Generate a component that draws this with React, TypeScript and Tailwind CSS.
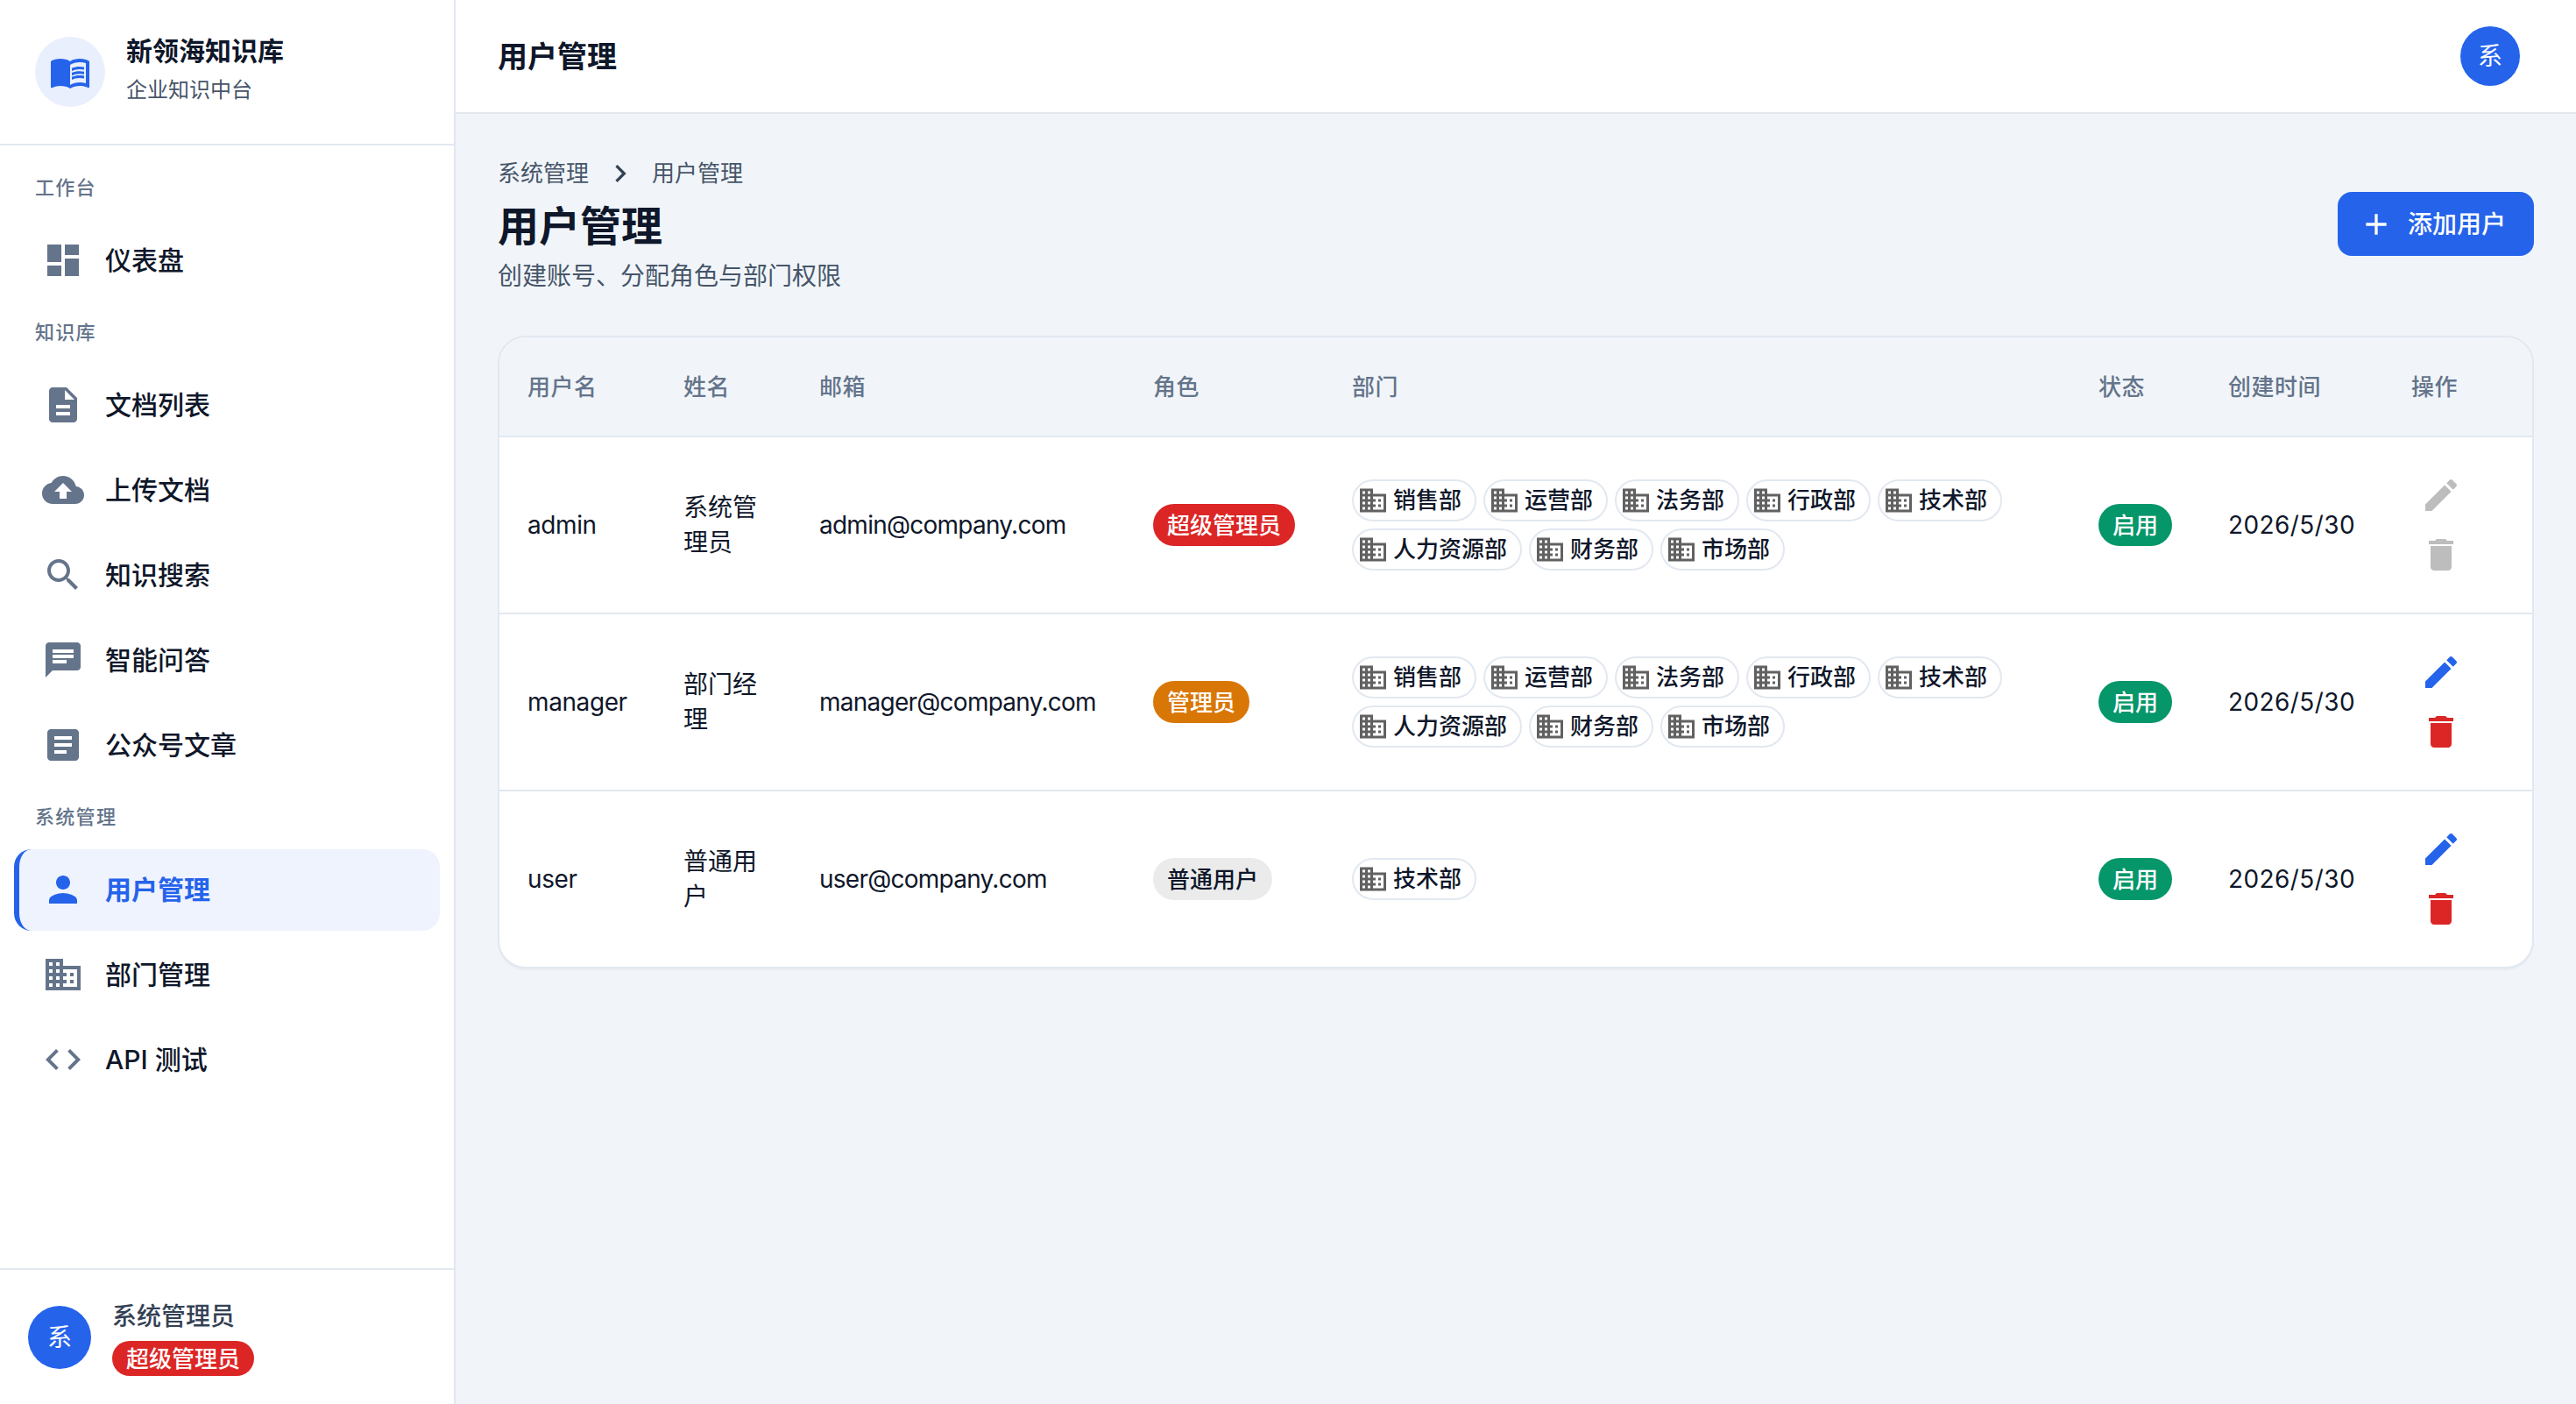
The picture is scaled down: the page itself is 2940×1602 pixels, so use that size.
import type { ReactNode } from 'react'

const icons = {
  book: 'M21 5c-1.11-.35-2.33-.5-3.5-.5-1.95 0-4.05.4-5.5 1.5-1.45-1.1-3.55-1.5-5.5-1.5S2.45 4.9 1 6v14.65c0 .25.25.5.5.5.1 0 .15-.05.25-.05C3.1 20.45 5.05 20 6.5 20c1.95 0 4.05.4 5.5 1.5 1.35-.85 3.8-1.5 5.5-1.5 1.65 0 3.35.3 4.75 1.05.1.05.15.05.25.05.25 0 .5-.25.5-.5V6c-.6-.45-1.25-.75-2-1zm0 13.5c-1.1-.35-2.3-.5-3.5-.5-1.7 0-4.15.65-5.5 1.5V8c1.35-.85 3.8-1.5 5.5-1.5 1.2 0 2.4.15 3.5.5v11.5zM17.5 10.5c.88 0 1.73.09 2.5.26V9.24c-.79-.15-1.64-.24-2.5-.24-1.7 0-3.24.29-4.5.83v1.66c1.13-.64 2.7-.99 4.5-.99zM13 12.49v1.66c1.13-.64 2.7-.99 4.5-.99.88 0 1.73.09 2.5.26V11.9c-.79-.15-1.64-.24-2.5-.24-1.7 0-3.24.3-4.5.83zM17.5 13.99c-1.7 0-3.24.29-4.5.83v1.66c1.13-.64 2.7-.99 4.5-.99.88 0 1.73.09 2.5.26v-1.52c-.79-.16-1.64-.24-2.5-.24z',
  dashboard: 'M3 13h8V3H3v10zm0 8h8v-6H3v6zm10 0h8V11h-8v10zm0-18v6h8V3h-8z',
  description: 'M14 2H6c-1.1 0-1.99.9-1.99 2L4 20c0 1.1.89 2 1.99 2H18c1.1 0 2-.9 2-2V8l-6-6zm2 16H8v-2h8v2zm0-4H8v-2h8v2zm-3-5V3.5L18.5 9H13z',
  upload: 'M19.35 10.04C18.67 6.59 15.64 4 12 4 9.11 4 6.6 5.64 5.35 8.04 2.34 8.36 0 10.91 0 14c0 3.31 2.69 6 6 6h13c2.76 0 5-2.24 5-5 0-2.64-2.05-4.78-4.65-4.96zM14 13v4h-4v-4H7l5-5 5 5h-3z',
  search: 'M15.5 14h-.79l-.28-.27C15.41 12.59 16 11.11 16 9.5 16 5.91 13.09 3 9.5 3S3 5.91 3 9.5 5.91 16 9.5 16c1.61 0 3.09-.59 4.23-1.57l.27.28v.79l5 4.99L20.49 19l-4.99-5zm-6 0C7.01 14 5 11.99 5 9.5S7.01 5 9.5 5 14 7.01 14 9.5 11.99 14 9.5 14z',
  chat: 'M20 2H4c-1.1 0-1.99.9-1.99 2L2 22l4-4h14c1.1 0 2-.9 2-2V4c0-1.1-.9-2-2-2zM6 9h12v2H6V9zm8 5H6v-2h8v2zm4-6H6V6h12v2z',
  article: 'M19 3H5c-1.1 0-2 .9-2 2v14c0 1.1.9 2 2 2h14c1.1 0 2-.9 2-2V5c0-1.1-.9-2-2-2zm-5 14H7v-2h7v2zm3-4H7v-2h10v2zm0-4H7V7h10v2z',
  person: 'M12 12c2.21 0 4-1.79 4-4s-1.79-4-4-4-4 1.79-4 4 1.79 4 4 4zm0 2c-2.67 0-8 1.34-8 4v2h16v-2c0-2.66-5.33-4-8-4z',
  domain: 'M12 7V3H2v18h20V7H12zM6 19H4v-2h2v2zm0-4H4v-2h2v2zm0-4H4V9h2v2zm0-4H4V5h2v2zm4 12H8v-2h2v2zm0-4H8v-2h2v2zm0-4H8V9h2v2zm0-4H8V5h2v2zm10 12h-8v-2h2v-2h-2v-2h2v-2h-2V9h8v10zm-2-8h-2v2h2v-2zm0 4h-2v2h2v-2z',
  code: 'M9.4 16.6L4.8 12l4.6-4.6L8 6l-6 6 6 6 1.4-1.4zm5.2 0l4.6-4.6-4.6-4.6L16 6l6 6-6 6-1.4-1.4z',
  edit: 'M3 17.25V21h3.75L17.81 9.94l-3.75-3.75L3 17.25zM20.71 7.04c.39-.39.39-1.02 0-1.41l-2.34-2.34c-.39-.39-1.02-.39-1.41 0l-1.83 1.83 3.75 3.75 1.83-1.83z',
  trash: 'M6 19c0 1.1.9 2 2 2h8c1.1 0 2-.9 2-2V7H6v12zM19 4h-3.5l-1-1h-5l-1 1H5v2h14V4z',
  add: 'M19 13h-6v6h-2v-6H5v-2h6V5h2v6h6v2z',
  next: 'M10 6L8.59 7.41 13.17 12l-4.58 4.59L10 18l6-6z',
}

function Icon({ d, className }: { d: string; className: string }) {
  return (
    <svg viewBox="0 0 24 24" fill="currentColor" className={`shrink-0 ${className}`}>
      <path d={d} />
    </svg>
  )
}

const navGroups = [
  { label: '工作台', items: [{ icon: icons.dashboard, text: '仪表盘' }] },
  {
    label: '知识库',
    items: [
      { icon: icons.description, text: '文档列表' },
      { icon: icons.upload, text: '上传文档' },
      { icon: icons.search, text: '知识搜索' },
      { icon: icons.chat, text: '智能问答' },
      { icon: icons.article, text: '公众号文章' },
    ],
  },
  {
    label: '系统管理',
    items: [
      { icon: icons.person, text: '用户管理', active: true },
      { icon: icons.domain, text: '部门管理' },
      { icon: icons.code, text: 'API 测试' },
    ],
  },
]

const allDepts = ['销售部', '运营部', '法务部', '行政部', '技术部', '人力资源部', '财务部', '市场部']

const users = [
  {
    username: 'admin',
    name: '系统管理员',
    email: 'admin@company.com',
    role: '超级管理员',
    roleClass: 'bg-[#dc2626] text-white',
    depts: allDepts,
    locked: true,
  },
  {
    username: 'manager',
    name: '部门经理',
    email: 'manager@company.com',
    role: '管理员',
    roleClass: 'bg-[#d97706] text-white',
    depts: allDepts,
    locked: false,
  },
  {
    username: 'user',
    name: '普通用户',
    email: 'user@company.com',
    role: '普通用户',
    roleClass: 'bg-[#ebebeb] text-[#0f172a]',
    depts: ['技术部'],
    locked: false,
  },
]

const columns = [
  { title: '用户名', width: 'w-[178px]' },
  { title: '姓名', width: 'w-[155px]' },
  { title: '邮箱', width: 'w-[381px]' },
  { title: '角色', width: 'w-[227px]' },
  { title: '部门', width: 'w-[852px]' },
  { title: '状态', width: 'w-[148px]' },
  { title: '创建时间', width: 'w-[209px]' },
  { title: '操作', width: 'w-[170px]' },
]

function Pill({ className, children }: { className: string; children: ReactNode }) {
  return (
    <span className={`flex h-[48px] w-fit items-center rounded-full px-4 text-[26px] leading-[39px] font-medium ${className}`}>
      {children}
    </span>
  )
}

function Avatar({ size }: { size: string }) {
  return (
    <div className={`flex shrink-0 items-center justify-center rounded-full bg-[#2563eb] text-[28px] text-white ${size}`}>
      系
    </div>
  )
}

function Sidebar() {
  return (
    <aside className="flex w-[520px] shrink-0 flex-col border-r-2 border-[#e2e8f0] bg-white">
      <div className="flex h-[166px] items-center gap-6 border-b-2 border-[#e2e8f0] px-10">
        <div className="flex h-[80px] w-[80px] items-center justify-center rounded-full bg-[#e9effd] text-[#2563eb]">
          <Icon d={icons.book} className="h-[48px] w-[48px]" />
        </div>
        <div>
          <div className="text-[30px] leading-[42px] font-semibold text-[#0f172a]">新领海知识库</div>
          <div className="text-[24px] leading-[48px] text-[#475569]">企业知识中台</div>
        </div>
      </div>

      <nav className="flex-1 pt-[16.5px]">
        {navGroups.map((group) => (
          <div key={group.label}>
            <div className="px-10 pt-[15px] pb-[20px] text-[22px] leading-[33px] font-medium tracking-[1.3px] text-[#64748b]">
              {group.label}
            </div>
            {group.items.map((item) => (
              <a
                key={item.text}
                className={`mx-4 mb-1 flex h-[93px] items-center gap-6 rounded-[20px] border-l-[6px] pl-[26px] text-[30px] leading-[45px] ${
                  item.active
                    ? 'border-[#2563eb] bg-[#eff3fe] font-semibold text-[#2563eb]'
                    : 'border-transparent font-medium text-[#0f172a]'
                }`}
              >
                <Icon d={item.icon} className={`h-[48px] w-[48px] ${item.active ? 'text-[#2563eb]' : 'text-[#64748b]'}`} />
                {item.text}
              </a>
            ))}
          </div>
        ))}
      </nav>

      <div className="flex h-[155px] items-center gap-6 border-t-2 border-[#e2e8f0] pl-8">
        <Avatar size="h-[72px] w-[72px]" />
        <div>
          <div className="text-[28px] leading-[42px] font-medium text-[#334155]">系统管理员</div>
          <span className="mt-[7px] flex h-[40px] w-fit items-center rounded-full bg-[#dc2626] px-4 text-[26px] font-medium text-white">
            超级管理员
          </span>
        </div>
      </div>
    </aside>
  )
}

function DeptChip({ name }: { name: string }) {
  return (
    <span className="inline-flex h-[48px] items-center rounded-full border-2 border-[#e2e8f0] pr-[15px] pl-1 text-[26px] font-medium text-[#0f172a]">
      <Icon d={icons.domain} className="mr-[5px] h-[36px] w-[36px] text-[#616161]" />
      {name}
    </span>
  )
}

function UserRow({ user, last }: { user: (typeof users)[number]; last: boolean }) {
  const cell = `px-8 py-8 align-middle ${last ? '' : 'border-b-2 border-[#e2e8f0]'}`
  return (
    <tr className="text-[28px] leading-[40px] text-[#0f172a]">
      <td className={`${cell} tracking-[-0.4px] ${last ? 'h-[200px]' : 'h-[202px]'}`}>{user.username}</td>
      <td className={cell}>{user.name}</td>
      <td className={`${cell} tracking-[-0.75px]`}>{user.email}</td>
      <td className={cell}>
        <Pill className={user.roleClass}>{user.role}</Pill>
      </td>
      <td className={cell}>
        <div className="flex flex-wrap gap-2">
          {user.depts.map((d) => (
            <DeptChip key={d} name={d} />
          ))}
        </div>
      </td>
      <td className={cell}>
        <Pill className="bg-[#059669] text-white">启用</Pill>
      </td>
      <td className={`${cell} tracking-[0.4px]`}>2026/5/30</td>
      <td className={`${cell} !py-0`}>
        <div className="flex w-[68px] flex-col">
          <button className="flex h-[68px] w-[68px] items-center justify-center">
            <Icon d={icons.edit} className={`h-[48px] w-[48px] ${user.locked ? 'text-[#bdbdbd]' : 'text-[#2563eb]'}`} />
          </button>
          <button className="flex h-[68px] w-[68px] items-center justify-center">
            <Icon d={icons.trash} className={`h-[48px] w-[48px] ${user.locked ? 'text-[#bdbdbd]' : 'text-[#dc2626]'}`} />
          </button>
        </div>
      </td>
    </tr>
  )
}

export default function App() {
  return (
    <div className="flex h-[1602px] font-[Inter,'Noto_Sans_CJK_SC',sans-serif]">
      <Sidebar />
      <div className="flex min-w-0 flex-1 flex-col bg-[#f1f5f9]">
        <header className="flex h-[130px] shrink-0 items-center justify-between border-b-2 border-[#e2e8f0] bg-white px-12 pr-16">
          <div className="text-[34px] leading-[51px] font-semibold text-[#0f172a]">用户管理</div>
          <Avatar size="h-[68px] w-[68px]" />
        </header>

        <main className="px-12 pt-12">
          <div className="mb-[47px] flex items-center justify-between">
            <div>
              <div className="flex h-[39px] items-center text-[26px] leading-[39px] text-[#475569]">
                <span>系统管理</span>
                <Icon d={icons.next} className="mx-4 h-[40px] w-[40px] text-[#334155]" />
                <span>用户管理</span>
              </div>
              <h1 className="mt-2 text-[47px] leading-[66px] font-bold text-[#0f172a]">用户管理</h1>
              <p className="mt-[3px] text-[28px] leading-[42px] text-[#475569]">创建账号、分配角色与部门权限</p>
            </div>
            <button className="mb-[3px] flex h-[73px] items-center gap-4 rounded-[16px] bg-[#2563eb] pr-8 pl-6 text-[28px] font-medium text-white">
              <Icon d={icons.add} className="h-[40px] w-[40px]" />
              添加用户
            </button>
          </div>

          <div className="overflow-hidden rounded-[32px] border-2 border-[#e2e8f0] bg-white shadow-[0_2px_0_#e8edf4]">
            <table className="w-[2320px] table-fixed border-separate border-spacing-0">
              <thead>
                <tr className="bg-[#f1f5f9]">
                  {columns.map((c) => (
                    <th
                      key={c.title}
                      className={`${c.width} h-[114px] border-b-2 border-[#e2e8f0] px-8 text-left text-[26px] leading-[39px] font-medium tracking-[0.5px] text-[#64748b]`}
                    >
                      {c.title}
                    </th>
                  ))}
                </tr>
              </thead>
              <tbody>
                {users.map((u, i) => (
                  <UserRow key={u.username} user={u} last={i === users.length - 1} />
                ))}
              </tbody>
            </table>
          </div>
        </main>
      </div>
    </div>
  )
}
